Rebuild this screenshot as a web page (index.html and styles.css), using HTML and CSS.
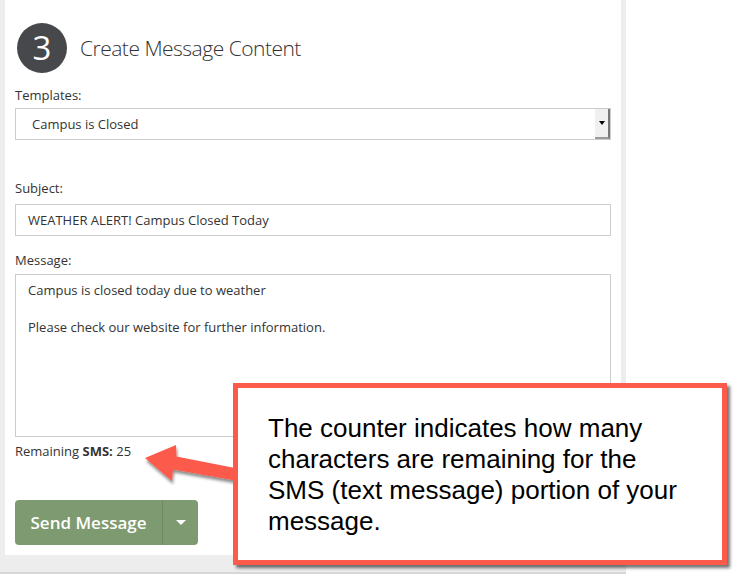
FILE: index.html
```html
<!DOCTYPE html>
<html>
<head>
<meta charset="utf-8">
<link rel="stylesheet" href="styles.css">
</head>
<body>
<div class="frame">
  <div class="panel">
    <div class="step">
      <div class="step-num">3</div>
      <h2 class="step-title">Create Message Content</h2>
    </div>
    <label class="label">Templates:</label>
    <div class="select">
      <span class="select-text">Campus is Closed</span>
      <span class="select-btn"><span class="select-arrow"></span></span>
    </div>
    <label class="label label-subject">Subject:</label>
    <div class="input">WEATHER ALERT! Campus Closed Today</div>
    <label class="label label-message">Message:</label>
    <div class="textarea">Campus is closed today due to weather<br><br>Please check our website for further information.</div>
    <div class="remaining">Remaining <b>SMS:</b> 25</div>
    <div class="btn-group">
      <div class="btn-main">Send Message</div>
      <div class="btn-caret"><span class="caret"></span></div>
    </div>
  </div>
  <div class="bottom-line"></div>
</div>
<svg class="arrow" width="110" height="60" viewBox="140 440 110 60">
  <defs>
    <filter id="sh" x="-20%" y="-20%" width="140%" height="160%">
      <feDropShadow dx="1" dy="3" stdDeviation="1.5" flood-color="#000" flood-opacity="0.45"/>
    </filter>
  </defs>
  <polygon filter="url(#sh)" fill="#fc5a4b" points="145,458 176,445 176.5,456.5 240,469 238,481 173,469.5 172,481"/>
</svg>
<div class="callout">The counter indicates how many characters are remaining for the SMS (text message) portion of your message.</div>
</body>
</html>
```
FILE: styles.css
```css
html, body { margin: 0; padding: 0; }
body {
  background: #fff;
  width: 744px;
  height: 574px;
  overflow: hidden;
  font-family: "Open Sans", "Liberation Sans", sans-serif;
  color: #333;
  position: relative;
}
.frame {
  width: 626px;
  height: 574px;
  background: #ededed;
  box-sizing: border-box;
  padding-left: 5px;
  padding-right: 5px;
  display: flex;
  flex-direction: column;
}
.panel {
  background: #fff;
  height: 555px;
  box-sizing: border-box;
  padding: 23px 10px 0 10px;
  display: flex;
  flex-direction: column;
}
.bottom-line {
  margin-top: auto;
  height: 2px;
  background: #d6d6d6;
  margin-left: -5px;
  margin-right: -5px;
}
.step {
  display: flex;
  align-items: center;
  gap: 13px;
  margin-left: 2px;
}
.step-num {
  width: 50px;
  height: 50px;
  border-radius: 50%;
  background: #46484b;
  color: #fff;
  font-size: 33px;
  line-height: 50px;
  text-align: center;
  font-weight: 400;
}
.step-title {
  margin: 0;
  font-size: 21px;
  font-weight: 300;
  color: #333;
  letter-spacing: -0.5px;
}
.label {
  display: block;
  font-size: 13px;
  line-height: 18px;
  margin-top: 13px;
  margin-bottom: 4px;
}
.label-subject { margin-top: 39px; margin-bottom: 7px; }
.label-message { margin-top: 15px; margin-bottom: 5px; }
.select {
  height: 32px;
  border: 1px solid #ccc;
  box-sizing: border-box;
  display: flex;
  align-items: center;
  font-size: 13px;
}
.select-text { padding-left: 16px; flex: 1; }
.select-btn {
  width: 15px;
  height: 30px;
  background: #f0f0f0;
  box-sizing: border-box;
  border-right: 2px solid #777;
  border-bottom: 2px solid #999;
  display: flex;
  align-items: center;
  justify-content: center;
}
.select-arrow {
  width: 0;
  height: 0;
  border-left: 3.5px solid transparent;
  border-right: 3.5px solid transparent;
  border-top: 4px solid #000;
  margin-left: 1px;
}
.input {
  height: 32px;
  border: 1px solid #ccc;
  box-sizing: border-box;
  font-size: 13px;
  line-height: 30px;
  padding-left: 12px;
}
.textarea {
  height: 163px;
  border: 1px solid #ccc;
  box-sizing: border-box;
  font-size: 13px;
  line-height: 18.5px;
  padding: 6px 12px;
}
.remaining {
  font-size: 13px;
  line-height: 18px;
  margin-top: 5px;
}
.remaining b { font-weight: 700; }
.btn-group {
  margin-top: 40px;
  display: flex;
  width: 183px;
  height: 45px;
  background: #7e9a70;
  border-radius: 4px;
  color: #fff;
}
.btn-main {
  width: 147px;
  font-size: 17px;
  font-weight: 600;
  line-height: 45px;
  text-align: center;
  border-right: 1px solid #6f8a62;
}
.btn-caret {
  flex: 1;
  display: flex;
  align-items: center;
  justify-content: center;
}
.caret {
  width: 0;
  height: 0;
  border-left: 5px solid transparent;
  border-right: 5px solid transparent;
  border-top: 5px solid #fff;
}
.arrow {
  position: absolute;
  left: 140px;
  top: 440px;
}
.callout {
  position: absolute;
  left: 233px;
  top: 383px;
  width: 494px;
  height: 182px;
  box-sizing: border-box;
  border: 5px solid #fc5a4b;
  background: #fff;
  box-shadow: 3px 3px 3px rgba(0,0,0,0.55);
  font-family: "Liberation Sans", Arial, sans-serif;
  font-size: 26px;
  line-height: 31px;
  color: #000;
  padding: 25px 32px 0 30px;
}
```
